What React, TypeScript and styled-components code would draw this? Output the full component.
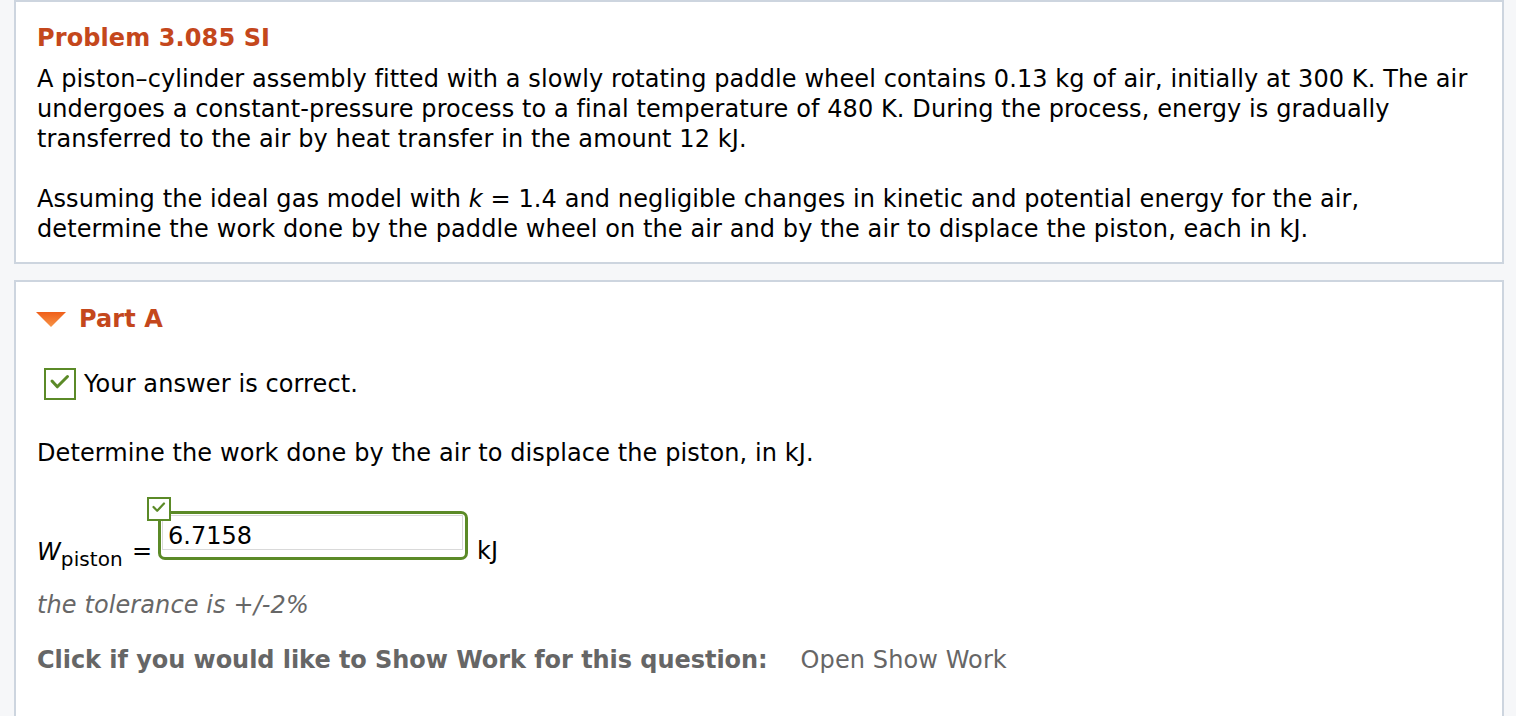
import React from 'react';
import styled, { createGlobalStyle } from 'styled-components';

const GlobalStyle = createGlobalStyle`
  html, body {
    margin: 0;
    padding: 0;
    background: #f6f7f9;
    overflow: hidden;
  }
  body {
    font-family: "DejaVu Sans", Verdana, sans-serif;
    font-size: 24px;
    line-height: 30px;
    letter-spacing: 0.1px;
    color: #000;
  }
`;

const Page = styled.div`
  padding: 0 12px 0 14px;
  display: flex;
  flex-direction: column;
  gap: 16px;
`;

const Card = styled.section<{ $open?: boolean }>`
  background: #fff;
  border: 2px solid #cdd5df;
  border-bottom-width: ${p => (p.$open ? 0 : 2)}px;
  padding: 20px 21px 18px;
  min-height: ${p => (p.$open ? '440px' : 'auto')};
`;

const Title = styled.h2`
  margin: 1px 0 11px;
  color: #c4471c;
  font-size: 24px;
  font-weight: bold;
  line-height: 30px;
`;

const Paragraph = styled.p`
  margin: 0;
  white-space: nowrap;
  & + & {
    margin-top: 30px;
  }
`;

const PartHeader = styled.div`
  display: flex;
  align-items: center;
  gap: 13px;
  margin: 2px 0 0 -1px;
  color: #c4471c;
  font-weight: bold;
`;

const Status = styled.div`
  display: flex;
  align-items: center;
  gap: 8px;
  margin: 34px 0 0 7px;
`;

const CheckBox = styled.span<{ $size: number }>`
  display: inline-flex;
  box-sizing: border-box;
  width: ${p => p.$size}px;
  height: ${p => p.$size}px;
  border: 2px solid #5b8a27;
  background: #fff;
`;

const Question = styled.p`
  margin: 38px 0 0;
`;

const AnswerRow = styled.div`
  display: flex;
  align-items: flex-end;
  margin-top: 43px;
`;

const Variable = styled.span`
  font-style: italic;
  margin-bottom: -2px;
`;

const Sub = styled.sub`
  font-style: normal;
  font-size: 20px;
  vertical-align: -6px;
  line-height: 0;
`;

const Equals = styled.span`
  margin: 0 6px -1px 9px;
`;

const FieldWrap = styled.span`
  position: relative;
  display: inline-block;
  margin-bottom: 5px;
`;

const FieldMark = styled(CheckBox)`
  position: absolute;
  left: -11px;
  top: -14px;
  z-index: 1;
`;

const Field = styled.span`
  display: block;
  box-sizing: border-box;
  width: 310px;
  height: 49px;
  border: 3px solid #5b8a27;
  border-radius: 7px;
  padding: 1px 2px 7px 1px;
`;

const FieldInner = styled.span`
  display: block;
  box-sizing: border-box;
  height: 35px;
  border: 1px solid #d9d9d9;
  padding: 7px 5px 0;
  line-height: 26px;
  letter-spacing: 0;
`;

const Unit = styled.span`
  margin: 0 0 -1px 9px;
`;

const Tolerance = styled.p`
  margin: 25px 0 0;
  font-style: italic;
  color: #676767;
`;

const ShowWork = styled.div`
  display: flex;
  gap: 33px;
  margin-top: 25px;
  color: #666;
`;

const ShowWorkLabel = styled.span`
  font-weight: bold;
  letter-spacing: -0.05px;
`;

const ShowWorkLink = styled.a`
  color: #666;
  text-decoration: none;
  cursor: pointer;
`;

const BigCheck = () => (
  <svg width="28" height="28" viewBox="0 0 28 28">
    <path d="M6 11 L11.3 16.8 L21.5 6.5" fill="none" stroke="#5b8a27" strokeWidth="3" strokeLinecap="round" strokeLinejoin="round" />
  </svg>
);

const SmallCheck = () => (
  <svg width="20" height="20" viewBox="0 0 20 20">
    <path d="M4.5 8 L8.2 11.8 L15 4.5" fill="none" stroke="#5b8a27" strokeWidth="2.2" strokeLinecap="round" strokeLinejoin="round" />
  </svg>
);

const Caret = () => (
  <svg width="30" height="15" viewBox="0 0 30 15">
    <defs>
      <linearGradient id="caretFill" x1="0" y1="0" x2="0" y2="1">
        <stop offset="0" stopColor="#ef5f1a" />
        <stop offset="1" stopColor="#f79447" />
      </linearGradient>
    </defs>
    <path d="M0 0 H30 L15 15 Z" fill="url(#caretFill)" />
  </svg>
);

export default function App() {
  return (
    <>
      <GlobalStyle />
      <Page>
        <Card>
          <Title>Problem 3.085 SI</Title>
          <Paragraph>
            A piston–cylinder assembly fitted with a slowly rotating paddle wheel contains 0.13 kg of air, initially at 300 K. The air<br />
            undergoes a constant-pressure process to a final temperature of 480 K. During the process, energy is gradually<br />
            transferred to the air by heat transfer in the amount 12 kJ.
          </Paragraph>
          <Paragraph>
            Assuming the ideal gas model with <i>k</i> = 1.4 and negligible changes in kinetic and potential energy for the air,<br />
            determine the work done by the paddle wheel on the air and by the air to displace the piston, each in kJ.
          </Paragraph>
        </Card>
        <Card $open>
          <PartHeader>
            <Caret />
            Part A
          </PartHeader>
          <Status>
            <CheckBox $size={32}><BigCheck /></CheckBox>
            Your answer is correct.
          </Status>
          <Question>Determine the work done by the air to displace the piston, in kJ.</Question>
          <AnswerRow>
            <Variable>W<Sub>piston</Sub></Variable>
            <Equals>=</Equals>
            <FieldWrap>
              <FieldMark $size={24}><SmallCheck /></FieldMark>
              <Field>
                <FieldInner>6.7158</FieldInner>
              </Field>
            </FieldWrap>
            <Unit>kJ</Unit>
          </AnswerRow>
          <Tolerance>the tolerance is +/-2%</Tolerance>
          <ShowWork>
            <ShowWorkLabel>Click if you would like to Show Work for this question:</ShowWorkLabel>
            <ShowWorkLink>Open Show Work</ShowWorkLink>
          </ShowWork>
        </Card>
      </Page>
    </>
  );
}
